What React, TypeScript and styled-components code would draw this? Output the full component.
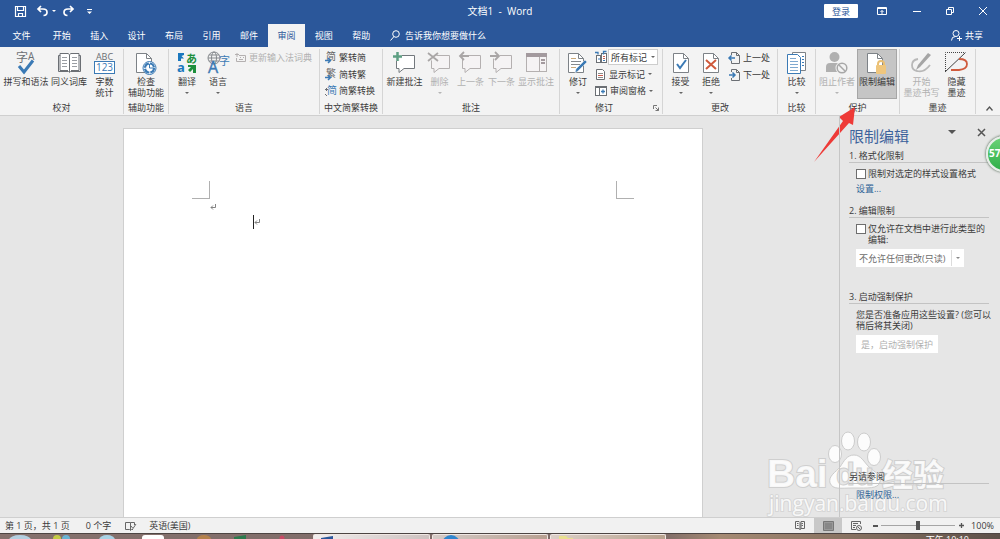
import React, { ReactNode } from "react";
import styled, { createGlobalStyle, css } from "styled-components";

const GlobalStyle = createGlobalStyle`
  * { box-sizing: border-box; }
  html, body { margin: 0; padding: 0; }
  body, button, input, select {
    font-family: "Open Sans", "Noto Sans CJK SC", sans-serif;
    font-size: 9px;
    line-height: 11px;
    color: #3b3b3b;
  }
  button {
    margin: 0; padding: 0; border: 0; background: none;
    white-space: nowrap; display: flex; align-items: center; justify-content: center;
  }
  svg { display: block; flex: none; overflow: visible; }
`;

const BLUE = "#2b579a";
const INK = "#6b6f74";
const ACCENT = "#3b7ab5";
const OFF = "#b4b0b0";

/* ---------- shell ---------- */
const Shell = styled.div`
  position: relative;
  height: 100vh;
  display: flex;
  flex-direction: column;
  overflow: hidden;
  background: #e6e6e6;
`;
const TitleBar = styled.header`
  flex: none;
  height: 24px;
  padding-bottom: 2px;
  display: grid;
  grid-template-columns: 1fr auto 1fr;
  align-items: center;
  background: ${BLUE};
  color: #fff;
`;
const QuickAccess = styled.div`
  display: flex;
  align-items: center;
  padding-left: 15px;
`;
const QuickButton = styled.button<{ $gap?: number }>`
  margin-right: ${(p) => p.$gap ?? 0}px;
  height: 14px;
`;
const DocTitle = styled.div`
  font-size: 10px;
  line-height: 12px;
  white-space: pre;
`;
const WindowTools = styled.div`
  display: flex;
  align-items: center;
  justify-content: flex-end;
  padding-right: 12px;
`;
const SignIn = styled.button`
  width: 34px;
  height: 14px;
  background: #fff;
  color: ${BLUE};
  border-radius: 1px;
  margin-right: 18px;
`;
const WindowButton = styled.button<{ $gap?: number }>`
  width: 11px;
  height: 14px;
  margin-right: ${(p) => p.$gap ?? 0}px;
`;

const TabBar = styled.nav`
  flex: none;
  height: 23px;
  display: flex;
  align-items: stretch;
  background: ${BLUE};
`;
const Tabs = styled.div`
  display: grid;
  grid-template-columns: 43px repeat(9, 1fr);
  width: 380px;
`;
const Tab = styled.button<{ $active?: boolean }>`
  color: ${(p) => (p.$active ? BLUE : "#fff")};
  background: ${(p) => (p.$active ? "#f3f3f3" : "transparent")};
`;
const TellMe = styled.button`
  color: #fff;
  gap: 5px;
  margin-left: 10px;
`;
const Share = styled.button`
  color: #fff;
  gap: 3px;
  margin-left: auto;
  margin-right: 17px;
`;

/* ---------- ribbon ---------- */
const Ribbon = styled.section`
  flex: none;
  display: flex;
  padding: 2px 0 1px;
  background: #f3f3f3;
  border-bottom: 1px solid #cfcfcf;
`;
const Group = styled.div<{ $w: number }>`
  width: ${(p) => p.$w}px;
  flex: none;
  display: flex;
  flex-direction: column;
  gap: 3px;
  border-right: 1px solid #d5d5d5;
`;
const GroupBody = styled.div<{ $pad: number }>`
  height: 50px;
  display: flex;
  padding-left: ${(p) => p.$pad}px;
`;
const GroupLabel = styled.div`
  display: flex;
  justify-content: center;
  line-height: 12px;
  white-space: nowrap;
`;
const Launcher = styled.button`
  width: 9px;
  height: 12px;
  margin-left: auto;
`;
const ReviseLabel = styled(GroupLabel)`
  padding: 0 2px 0 35px;
  justify-content: flex-start;
`;
const Big = styled.button<{ $w: number; $pressed?: boolean }>`
  width: ${(p) => p.$w}px;
  height: 50px;
  flex-direction: column;
  justify-content: flex-start;
  &:disabled { color: #b1b1b1; }
  ${(p) => p.$pressed && css`
    background: #c5c5c5;
    outline: 1px solid #a6a6a6;
    outline-offset: -1px;
  `}
`;
const BigIcon = styled.span`
  height: 27px;
  display: flex;
  align-items: center;
`;
const CaretRow = styled.span`
  height: 11px;
  display: flex;
  align-items: center;
`;
const Stack = styled.div<{ $ml?: number }>`
  display: flex;
  flex-direction: column;
  align-items: flex-start;
  margin-left: ${(p) => p.$ml ?? 0}px;
`;
const Small = styled.button`
  height: 17px;
  gap: 3px;
  &:disabled { color: #b1b1b1; }
`;
const MarkupRow = styled.div`
  height: 17px;
  display: flex;
  align-items: center;
  gap: 1px;
`;
const SelectBox = styled.div<{ $w: number; $h: number; $line?: boolean }>`
  position: relative;
  width: ${(p) => p.$w}px;
  height: ${(p) => p.$h}px;
  background: #fff;
  border: 1px solid ${(p) => (p.$line ? "#fff" : "#cdcdcd")};
  select {
    appearance: none;
    width: 100%;
    height: 100%;
    display: block;
    margin: 0;
    padding: 0 0 0 2px;
    border: 0;
    background: transparent;
    opacity: 1;
    color: ${(p) => (p.$line ? "#6d6d6d" : "#3b3b3b")};
  }
`;
const SelectArrow = styled.span<{ $line?: boolean }>`
  position: absolute;
  right: 0;
  top: 0;
  bottom: 0;
  width: ${(p) => (p.$line ? 12 : 8)}px;
  display: flex;
  align-items: center;
  justify-content: center;
  pointer-events: none;
  border-left: ${(p) => (p.$line ? "1px solid #dcdcdc" : "0")};
`;
const RibbonEnd = styled.div`
  flex: 1;
  display: flex;
  align-items: flex-end;
  justify-content: flex-end;
  padding: 0 7px 3px 0;
`;

/* ---------- workspace ---------- */
const Workspace = styled.main`
  flex: 1;
  min-height: 0;
  display: flex;
`;
const Canvas = styled.div`
  flex: 1;
  display: flex;
  justify-content: center;
  padding: 12px 13px 0 0;
`;
const Page = styled.article`
  width: 580px;
  background: #fff;
  border: 1px solid #cfcfcf;
  border-bottom: 0;
  padding: 52px 68px 0;
`;
const Margins = styled.div`
  display: flex;
  justify-content: space-between;
`;
const Corner = styled.span<{ $side: "left" | "right" }>`
  width: 18px;
  height: 18px;
  border-bottom: 1px solid #b0b0b0;
  border-${(p) => (p.$side === "left" ? "right" : "left")}: 1px solid #b0b0b0;
`;
const Line = styled.div<{ $indent: number }>`
  height: 15px;
  display: flex;
  align-items: center;
  padding-left: ${(p) => p.$indent}px;
`;
const Cursor = styled.span`
  width: 1px;
  height: 14px;
  background: #222;
`;

const Pane = styled.aside`
  position: relative;
  z-index: 1;
  width: 161px;
  flex: none;
  display: flex;
  flex-direction: column;
  border-left: 1px solid #c6c6c6;
  padding: 8px 11px 16px 9px;
`;
const PaneHead = styled.div`
  display: flex;
  align-items: flex-start;
  height: 26px;
  h2 {
    margin: 0;
    flex: 1;
    font-size: 15px;
    line-height: 24px;
    font-weight: 400;
    color: #3d639c;
  }
`;
const PaneButton = styled.button<{ $gap?: number }>`
  width: 9px;
  height: 16px;
  margin-right: ${(p) => p.$gap ?? 3}px;
`;
const Section = styled.section<{ $top?: number | "auto" }>`
  margin-top: ${(p) => (p.$top === "auto" ? "auto" : `${p.$top ?? 0}px`)};
  h3 {
    margin: 0;
    font-size: 9px;
    line-height: 12px;
    font-weight: 400;
    border-bottom: 1px solid #c3c3c3;
  }
`;
const SectionBody = styled.div`
  display: flex;
  flex-direction: column;
  align-items: flex-start;
  gap: 4px;
  padding: 5px 0 0 7px;
  p { margin: 0; white-space: nowrap; }
`;
const Check = styled.label`
  display: flex;
  align-items: flex-start;
  gap: 2px;
  white-space: nowrap;
  line-height: 11px;
  input {
    appearance: none;
    flex: none;
    width: 10px;
    height: 10px;
    margin: 1px 0 0;
    background: #fff;
    border: 1px solid #6e6e6e;
  }
`;
const PaneLink = styled.a`
  color: #2f6496;
  text-decoration: none;
  line-height: 12px;
`;
const StartButton = styled.button`
  width: 82px;
  height: 18px;
  background: #fff;
  &:disabled { color: #b0b0b0; }
`;

/* ---------- status bar and taskbar ---------- */
const StatusBar = styled.footer`
  flex: none;
  height: 16px;
  display: flex;
  align-items: center;
  padding: 0 6px 0 5px;
  background: #f1f1f1;
  border-top: 1px solid #cfcfcf;
  white-space: nowrap;
`;
const StatusText = styled.span<{ $gap: number }>`
  margin-right: ${(p) => p.$gap}px;
`;
const ViewButtons = styled.div`
  display: flex;
  margin-left: auto;
  align-self: stretch;
`;
const ViewButton = styled.button<{ $active?: boolean }>`
  width: 28px;
  background: ${(p) => (p.$active ? "#c8c8c8" : "transparent")};
`;
const Zoom = styled.div`
  display: flex;
  align-items: center;
  gap: 3px;
  margin: 0 7px 0 2px;
  input {
    appearance: none;
    width: 74px;
    height: 10px;
    margin: 0;
    background: linear-gradient(#a5a5a5, #a5a5a5) center / 100% 1px no-repeat;
  }
  input::-webkit-slider-thumb {
    appearance: none;
    width: 4px;
    height: 9px;
    background: #555;
  }
`;
const ZoomButton = styled.button`
  width: 6px;
  height: 10px;
`;
const Taskbar = styled.div`
  flex: none;
  height: 6px;
  display: flex;
  border-top: 1px solid #4d4543;
  background: linear-gradient(90deg, #85716d 0%, #7d6a67 66%, #a58a73 72%, #8a7463 84%, #5d5049 100%);
  overflow: hidden;
`;
const TaskIcons = styled.div`
  flex: none;
  width: 313px;
`;
const TaskWindow = styled.div<{ $w: number; $bg: string }>`
  width: ${(p) => p.$w}px;
  flex: none;
  margin-right: 2px;
  border: 1px solid #efe7e3;
  border-bottom: 0;
  border-radius: 2px 2px 0 0;
  background: ${(p) => p.$bg};
`;
const Clock = styled.div`
  margin-left: auto;
  margin-right: 31px;
  line-height: 12px;
  color: #fff;
  white-space: nowrap;
`;

/* ---------- overlays ---------- */
const Watermark = styled.svg`
  position: absolute;
  right: 50px;
  bottom: 18px;
  pointer-events: none;
`;
const Pointer = styled.svg`
  position: absolute;
  right: 142px;
  top: 107px;
  pointer-events: none;
`;
const Badge = styled.div`
  position: absolute;
  z-index: 2;
  right: -22px;
  top: 136px;
  width: 36px;
  height: 36px;
  border-radius: 50%;
  border: 2px solid #e8efe9;
  background: linear-gradient(#6ad277, #2fae48);
  box-shadow: 0 0 2px 1px #8d9a8f;
  color: #fff;
  font-size: 10px;
  font-weight: 700;
  line-height: 31px;
  padding-left: 1px;
`;

/* ---------- icons ---------- */
const Caret = ({ color = "#666", s = 4 }: { color?: string; s?: number }) => (
  <svg width={s} height={s / 2} viewBox="0 0 4 2"><path d="M0 0h4L2 2z" fill={color} /></svg>
);
const SpellIcon = () => (
  <svg width="20" height="24" viewBox="0 0 20 24">
    <text x="0" y="11" fontSize="12" fill={INK}>字</text>
    <text x="12" y="9" fontSize="10" fill={INK}>A</text>
    <path d="M3 15l5 6L17 9.5" stroke={ACCENT} strokeWidth="3" fill="none" />
  </svg>
);
const BookIcon = () => (
  <svg width="23" height="22" viewBox="0 0 23 22" fill="none">
    <path d="M.5 3.5H2V1.500h8l1.500 1 1.500-1h8v2h1.500v16h-10l-1 1-1-1H.5z" fill="#fff" stroke={INK} />
    <path d="M11.500 3v17M2 3v15.500h8M21 3v15.500h-8" stroke={INK} />
    <path d="M4 5.500h5M4 8.500h5M4 11.500h5M4 14.500h5M14 5.500h5M14 8.500h5M14 11.500h5M14 14.500h5" stroke="#9a9ea3" />
  </svg>
);
const CountIcon = () => (
  <svg width="21" height="22" viewBox="0 0 21 22">
    <text x="10.5" y="8" fontSize="9" textAnchor="middle" fill={INK}>ABC</text>
    <rect x=".5" y="9.5" width="20" height="12" fill="#fff" stroke={ACCENT} />
    <text x="10.5" y="19" fontSize="10" textAnchor="middle" fill={ACCENT}>123</text>
  </svg>
);
const Sheet = ({ children, w = 20 }: { children?: ReactNode; w?: number }) => (
  <svg width={w} height="22" viewBox={`0 0 ${w} 22`} fill="none">
    <path d="M.5 1.500h10l5 5v14H.5z" fill="#fff" stroke="#7d8287" />
    <path d="M10.500 1.500v5h5" stroke="#7d8287" />
    {children}
  </svg>
);
const AccessIcon = () => (
  <Sheet>
    <circle cx="13.5" cy="16" r="6.500" fill="#fff" stroke={ACCENT} />
    <circle cx="13.5" cy="16" r="4.500" stroke={ACCENT} strokeWidth="2.200" strokeDasharray="6 1" />
    <path d="M13.500 12v4h4" stroke={ACCENT} />
  </Sheet>
);
const TranslateIcon = () => (
  <svg width="20" height="22" viewBox="0 0 20 22">
    <path d="M1 1v8h3V6.500h3L4.500 4 7 3V1z" fill="#1b78be" />
    <text x="9" y="11" fontSize="11" fontWeight="700" fill="#1d8f3c">あ</text>
    <text x="0" y="20" fontSize="13" fontWeight="700" fill="#1b78be">a</text>
    <path d="M19 21v-8h-8v2h3l-3 3 2 2 3-3v4z" fill="#1d8f3c" />
  </svg>
);
const LanguageIcon = () => (
  <svg width="23" height="23" viewBox="0 0 23 23" fill="none">
    <circle cx="7" cy="7" r="6" stroke="#85898d" />
    <ellipse cx="7" cy="7" rx="2.5" ry="6" stroke="#85898d" />
    <path d="M1 7h12M2 4h10M2 10h10" stroke="#85898d" />
    <text x="1" y="22" fontSize="16" fill={ACCENT} stroke={ACCENT} strokeWidth=".4">A</text>
    <text x="12" y="14" fontSize="11" fill={ACCENT}>字</text>
  </svg>
);
const ImeIcon = () => (
  <svg width="11" height="10" viewBox="0 0 11 10" fill="none" stroke={OFF}>
    <path d="M4 2.500h6.500v6h-9V5" /><path d="M0 1.500h4M2 0v4M4 6.500h4M5 4.500h1M8 4.500h1" />
  </svg>
);
const ConvertIcon = ({ ch, both }: { ch: string; both?: boolean }) => (
  <svg width="11" height="12" viewBox="0 0 11 12" fill="none">
    <text x={both ? 2 : 1} y="9" fontSize="10" fill={both ? ACCENT : "#666"}>{ch}</text>
    {both ? <path d="M0 4.500h3M1.500 3v3M0 9l2 2" stroke={INK} /> : <path d="M0 9.500h5M3 7l2.500 2.500L3 12" stroke={ACCENT} strokeWidth="1.500" />}
  </svg>
);
const Comment = ({ children, color = OFF }: { children?: ReactNode; color?: string }) => (
  <svg width="23" height="22" viewBox="0 0 23 22" fill="none">
    <path d="M3.500 3.500h18v13H11l-5 4v-4H3.500z" fill={color === OFF ? "#f5f3f4" : "#fff"} stroke={color} />
    {children}
  </svg>
);
const NewCommentIcon = () => (
  <Comment color="#73787d"><path d="M0 4h9M4.500 0v9" stroke="#f3f3f3" strokeWidth="5" /><path d="M0 4.500h9M4.500 0v9" stroke="#5d9f82" strokeWidth="2.500" /></Comment>
);
const DeleteCommentIcon = () => (
  <Comment><path d="M0 0l9 9M9 0L0 9" stroke="#f3f3f3" strokeWidth="4" /><path d="M0 1l10 8M10 1L0 9" stroke="#a9a6a6" strokeWidth="1.800" /></Comment>
);
const StepCommentIcon = ({ next }: { next?: boolean }) => (
  <Comment>
    <g transform={next ? "translate(10 0) scale(-1 1)" : undefined}>
      <path d="M0 4h10" stroke="#f3f3f3" strokeWidth="5" />
      <path d="M1 4h9M5 0L1 4l4 4" stroke="#a9a6a6" strokeWidth="1.800" />
    </g>
  </Comment>
);
const ShowCommentsIcon = () => (
  <svg width="21" height="20" viewBox="0 0 21 20" fill="none">
    <rect x=".5" y=".5" width="20" height="18" fill="#f5f3f4" stroke={OFF} />
    <path d="M0 2h21" stroke="#a39a9e" strokeWidth="4" />
    <path d="M13.500 4v15" stroke={OFF} /><path d="M15 7h4M15 10h4" stroke="#a39a9e" strokeWidth="2" />
  </svg>
);
const TrackIcon = () => (
  <Sheet>
    <path d="M3 9.500h10M3 12.500h9" stroke="#85898d" />
    <path d="M3 6.500h5M3 15.500h5" stroke="#c9a879" />
    <path d="M19 10L10 19l-3 2 1-4 9-9z" fill={ACCENT} stroke="#f3f3f3" strokeWidth=".5" />
  </Sheet>
);
const MarkupIcon = () => (
  <svg width="12" height="12" viewBox="0 0 12 12" fill="none">
    <rect x="1.5" y="4.5" width="4" height="7" fill="#fff" stroke={INK} /><rect x="6.5" y="2.5" width="5" height="9" fill="#fff" stroke={INK} />
    <path d="M0 1.500h3v2M11.500.500h-3v3" stroke={ACCENT} strokeWidth="1.300" /><path d="M8 5.500h2M8 7.500h2" stroke="#c75c4c" /><path d="M8 9.500h2M3 8h2" stroke={ACCENT} />
  </svg>
);
const ShowMarkupIcon = () => (
  <svg width="11" height="12" viewBox="0 0 11 12" fill="none">
    <path d="M1.500 1.500h6l2 2v8h-8z" fill="#fff" stroke={INK} /><path d="M3 5.500h5M3 9.500h5" stroke="#8b8b8b" /><path d="M3 7.500h5" stroke="#c75c4c" />
  </svg>
);
const ReviewPaneIcon = () => (
  <svg width="12" height="10" viewBox="0 0 12 10" fill="none">
    <rect x=".5" y=".5" width="11" height="9" fill="#fff" stroke={INK} /><path d="M0 1h12" stroke={INK} strokeWidth="2" />
    <path d="M4.500 2v8" stroke={INK} /><path d="M6 5.500h4M8 3.500v4" stroke={ACCENT} strokeWidth="1.300" />
  </svg>
);
const AcceptIcon = () => <Sheet w={16}><path d="M4 12l3 4 6-8" stroke={ACCENT} strokeWidth="2" /></Sheet>;
const RejectIcon = () => <Sheet w={16}><path d="M3 8l10 9M13 8L3 17" stroke="#d05a3c" strokeWidth="2" /></Sheet>;
const ChangeIcon = ({ next }: { next?: boolean }) => (
  <svg width="11" height="12" viewBox="0 0 11 12" fill="none">
    <path d="M2.500 3V.500h5l3 3v8h-8V9M7.500.500v3h3" stroke={INK} />
    {next ? <path d="M0 6h6M3.500 3.500L6 6 3.500 8.500" stroke={ACCENT} strokeWidth="1.500" /> : <path d="M6 6H0M2.500 3.500L0 6l2.500 2.500" stroke={ACCENT} strokeWidth="1.500" />}
  </svg>
);
const CompareIcon = () => (
  <svg width="19" height="22" viewBox="0 0 19 22" fill="none">
    <path d="M5.500.500h13v18h-13z" fill="#fff" stroke="#7d8287" />
    <path d="M.5 2.500h10l3 3v16H.5z" fill="#fff" stroke={ACCENT} />
    <path d="M3 6.500h6M3 9.500h8M3 12.500h8M3 15.500h8M3 18.500h8" stroke="#7fa9d0" /><path d="M15 4.500h2M15 7.500h2M15 10.500h2M15 13.500h2" stroke={ACCENT} />
  </svg>
);
const BlockIcon = () => (
  <svg width="22" height="22" viewBox="0 0 22 22" fill="none">
    <circle cx="8.5" cy="5" r="5" fill="#b0b0b0" /><path d="M0 20v-5q0-4 4-4h9q3 0 3 4v5z" fill="#b0b0b0" />
    <circle cx="16" cy="16" r="6.5" fill="#f3f3f3" /><circle cx="16" cy="16" r="4.800" stroke="#a8a8a8" strokeWidth="1.500" /><path d="M12.500 12.500l7 7" stroke="#a8a8a8" strokeWidth="1.500" />
  </svg>
);
const RestrictIcon = () => (
  <Sheet>
    <path d="M11 14v-2a3 3 0 0 1 6 0v2" stroke="#e9bf73" strokeWidth="2" /><rect x="9" y="13" width="10" height="9" rx="1" fill="#efc67d" />
  </Sheet>
);
const InkIcon = () => (
  <svg width="21" height="22" viewBox="0 0 21 22" fill="none">
    <path d="M20 3L9 15l-4 3 2-5L17 1z" fill="#a5a5a5" />
    <path d="M7 7q-6 1-6 6t5 6q7 2 13-6" stroke="#b8b8b8" strokeWidth="1.800" />
  </svg>
);
const HideInkIcon = () => (
  <svg width="23" height="21" viewBox="0 0 23 21" fill="none">
    <path d="M.5 19V.500h20" stroke="#444" strokeDasharray="1 1" /><path d="M0 20L20 1" stroke="#444" />
    <path d="M14 7q8 0 8 5t-8 6H6" stroke="#d05a3c" strokeWidth="1.800" />
  </svg>
);
const ReturnMark = () => (
  <svg width="6" height="6" viewBox="0 0 6 6" fill="none" stroke="#777"><path d="M5.500 0v3.500H1M3 1.500l-2 2 2 2" strokeWidth=".9" /></svg>
);

/* ---------- composed parts ---------- */
type BigProps = { w: number; icon: ReactNode; label: string; label2?: string; caret?: boolean; disabled?: boolean; pressed?: boolean };
const BigButton = ({ w, icon, label, label2, caret, disabled, pressed }: BigProps) => (
  <Big type="button" $w={w} $pressed={pressed} disabled={disabled} aria-pressed={pressed}>
    <BigIcon>{icon}</BigIcon>
    <span>{label}</span>
    {label2 && <span>{label2}</span>}
    {caret && <CaretRow><Caret color={disabled ? "#b5b5b5" : "#666"} /></CaretRow>}
  </Big>
);
const RibbonGroup = ({ w, pad, label, children }: { w: number; pad: number; label: string; children: ReactNode }) => (
  <Group $w={w}>
    <GroupBody $pad={pad}>{children}</GroupBody>
    <GroupLabel>{label}</GroupLabel>
  </Group>
);

const tabs = ["文件", "开始", "插入", "设计", "布局", "引用", "邮件", "审阅", "视图", "帮助"];

export default function App() {
  return (
    <Shell>
      <GlobalStyle />
      <TitleBar>
        <QuickAccess>
          <QuickButton type="button" aria-label="保存" $gap={11}>
            <svg width="11" height="11" viewBox="0 0 11 11" fill="none" stroke="#fff"><path d="M.5.500h10v10H.5zM2.500.500v4h6v-4M3.500 10V7.500h4V10" strokeWidth="1.200" /></svg>
          </QuickButton>
          <QuickButton type="button" aria-label="撤消" $gap={4}>
            <svg width="11" height="10" viewBox="0 0 11 10" fill="none" stroke="#fff"><path d="M4 0L1 3l3 3M1 3h5q4 0 4 3.200T6.500 9.500" strokeWidth="1.700" /></svg>
          </QuickButton>
          <QuickButton type="button" aria-label="撤消选项" $gap={7}><Caret color="#fff" /></QuickButton>
          <QuickButton type="button" aria-label="重复" $gap={13}>
            <svg width="11" height="10" viewBox="0 0 11 10" fill="none" stroke="#fff"><path d="M7 0l3 3-3 3M10 3H5Q1 3 1 6.200T4.500 9.500" strokeWidth="1.700" /></svg>
          </QuickButton>
          <QuickButton type="button" aria-label="自定义">
            <svg width="5" height="5" viewBox="0 0 5 5" fill="#fff"><path d="M0 0h5v1H0zM0 2.500h5L2.500 5z" /></svg>
          </QuickButton>
        </QuickAccess>
        <DocTitle>文档1  -  Word</DocTitle>
        <WindowTools>
          <SignIn type="button">登录</SignIn>
          <WindowButton type="button" aria-label="功能区显示选项" $gap={24}>
            <svg width="10" height="8" viewBox="0 0 10 8" fill="none" stroke="#fff"><path d="M.5.500h9v7h-9zM0 1.500h10M5 3.500V7M3.500 5L5 3.500 6.500 5" /></svg>
          </WindowButton>
          <WindowButton type="button" aria-label="最小化" $gap={22}>
            <svg width="8" height="1" viewBox="0 0 8 1"><path d="M0 0h8v1H0z" fill="#fff" /></svg>
          </WindowButton>
          <WindowButton type="button" aria-label="还原" $gap={22}>
            <svg width="8" height="8" viewBox="0 0 8 8" fill="none" stroke="#fff"><path d="M.5 2.500h5v5h-5zM2.500 2.500v-2h5v5h-2" /></svg>
          </WindowButton>
          <WindowButton type="button" aria-label="关闭">
            <svg width="8" height="8" viewBox="0 0 8 8" stroke="#fff"><path d="M0 0l8 8M8 0L0 8" /></svg>
          </WindowButton>
        </WindowTools>
      </TitleBar>

      <TabBar>
        <Tabs>{tabs.map((t) => <Tab key={t} type="button" $active={t === "审阅"}>{t}</Tab>)}</Tabs>
        <TellMe type="button">
          <svg width="10" height="11" viewBox="0 0 10 11" fill="none" stroke="#fff"><circle cx="6" cy="4" r="3.300" /><path d="M4 6.500L.5 10.500" /></svg>
          告诉我你想要做什么
        </TellMe>
        <Share type="button">
          <svg width="11" height="11" viewBox="0 0 11 11" fill="none" stroke="#fff"><circle cx="5" cy="3.500" r="3" /><path d="M.5 10.500q0-4 4-4M6 8.500h5M8.500 6v5" /></svg>
          共享
        </Share>
      </TabBar>

      <Ribbon>
        <RibbonGroup w={124} pad={3} label="校对">
          <BigButton w={46} icon={<SpellIcon />} label="拼写和语法" />
          <BigButton w={40} icon={<BookIcon />} label="同义词库" />
          <BigButton w={31} icon={<CountIcon />} label="字数" label2="统计" />
        </RibbonGroup>
        <RibbonGroup w={45} pad={2} label="辅助功能">
          <BigButton w={40} icon={<AccessIcon />} label="检查" label2="辅助功能" />
        </RibbonGroup>
        <RibbonGroup w={151} pad={2} label="语言">
          <BigButton w={32} icon={<TranslateIcon />} label="翻译" caret />
          <BigButton w={30} icon={<LanguageIcon />} label="语言" caret />
          <Stack $ml={2}>
            <Small type="button" disabled><ImeIcon />更新输入法词典</Small>
          </Stack>
        </RibbonGroup>
        <RibbonGroup w={63} pad={5} label="中文简繁转换">
          <Stack>
            <Small type="button"><ConvertIcon ch="简" />繁转简</Small>
            <Small type="button"><ConvertIcon ch="繁" />简转繁</Small>
            <Small type="button"><ConvertIcon ch="简" both />简繁转换</Small>
          </Stack>
        </RibbonGroup>
        <RibbonGroup w={177} pad={2} label="批注">
          <BigButton w={39} icon={<NewCommentIcon />} label="新建批注" />
          <BigButton w={31} icon={<DeleteCommentIcon />} label="删除" caret disabled />
          <BigButton w={31} icon={<StepCommentIcon />} label="上一条" disabled />
          <BigButton w={31} icon={<StepCommentIcon next />} label="下一条" disabled />
          <BigButton w={38} icon={<ShowCommentsIcon />} label="显示批注" disabled />
        </RibbonGroup>
        <Group $w={103}>
          <GroupBody $pad={4}>
            <BigButton w={28} icon={<TrackIcon />} label="修订" caret />
            <Stack $ml={3}>
              <MarkupRow>
                <MarkupIcon />
                <SelectBox $w={50} $h={16}>
                  <select aria-label="显示以供审阅"><option>所有标记</option></select>
                  <SelectArrow><Caret /></SelectArrow>
                </SelectBox>
              </MarkupRow>
              <Small type="button"><ShowMarkupIcon />显示标记<Caret /></Small>
              <Small type="button"><ReviewPaneIcon />审阅窗格<Caret /></Small>
            </Stack>
          </GroupBody>
          <ReviseLabel>
            修订
            <Launcher type="button" aria-label="修订选项">
              <svg width="6" height="6" viewBox="0 0 6 6" fill="none" stroke="#777"><path d="M.5 4V.500H4M2.500 2.500l3 3M5.500 2.500v3h-3" /></svg>
            </Launcher>
          </ReviseLabel>
        </Group>
        <RibbonGroup w={115} pad={2} label="更改">
          <BigButton w={31} icon={<AcceptIcon />} label="接受" caret />
          <BigButton w={30} icon={<RejectIcon />} label="拒绝" caret />
          <Stack $ml={3}>
            <Small type="button"><ChangeIcon />上一处</Small>
            <Small type="button"><ChangeIcon next />下一处</Small>
          </Stack>
        </RibbonGroup>
        <RibbonGroup w={38} pad={3} label="比较">
          <BigButton w={31} icon={<CompareIcon />} label="比较" caret />
        </RibbonGroup>
        <RibbonGroup w={84} pad={1} label="保护">
          <BigButton w={40} icon={<BlockIcon />} label="阻止作者" caret disabled />
          <BigButton w={40} icon={<RestrictIcon />} label="限制编辑" pressed />
        </RibbonGroup>
        <RibbonGroup w={76} pad={2} label="墨迹">
          <BigButton w={39} icon={<InkIcon />} label="开始" label2="墨迹书写" disabled />
          <BigButton w={31} icon={<HideInkIcon />} label="隐藏" label2="墨迹" />
        </RibbonGroup>
        <RibbonEnd>
          <button type="button" aria-label="折叠功能区">
            <svg width="7" height="5" viewBox="0 0 7 5" fill="none" stroke="#555"><path d="M.5 4.500l3-3.500 3 3.500" strokeWidth="1.300" /></svg>
          </button>
        </RibbonEnd>
      </Ribbon>

      <Workspace>
        <Canvas>
          <Page>
            <Margins><Corner $side="left" /><Corner $side="right" /></Margins>
            <Line $indent={18}><ReturnMark /></Line>
            <Line $indent={61}><Cursor /><ReturnMark /></Line>
          </Page>
        </Canvas>
        <Pane>
          <PaneHead>
            <h2>限制编辑</h2>
            <PaneButton type="button" aria-label="窗格选项" $gap={21}><Caret s={8} color="#555" /></PaneButton>
            <PaneButton type="button" aria-label="关闭窗格">
              <svg width="7" height="7" viewBox="0 0 7 7" stroke="#555" strokeWidth="1.500"><path d="M0 0l7 7M7 0L0 7" /></svg>
            </PaneButton>
          </PaneHead>
          <Section>
            <h3>1. 格式化限制</h3>
            <SectionBody>
              <Check><input type="checkbox" /><span>限制对选定的样式设置格式</span></Check>
              <PaneLink href="#settings">设置...</PaneLink>
            </SectionBody>
          </Section>
          <Section $top={10}>
            <h3>2. 编辑限制</h3>
            <SectionBody>
              <Check><input type="checkbox" /><span>仅允许在文档中进行此类型的<br />编辑:</span></Check>
              <SelectBox $w={108} $h={18} $line>
                <select aria-label="编辑限制类型" disabled><option>不允许任何更改(只读)</option></select>
                <SelectArrow $line><Caret color="#888" /></SelectArrow>
              </SelectBox>
            </SectionBody>
          </Section>
          <Section $top={24}>
            <h3>3. 启动强制保护</h3>
            <SectionBody>
              <p>您是否准备应用这些设置? (您可以<br />稍后将其关闭)</p>
              <StartButton type="button" disabled>是，启动强制保护</StartButton>
            </SectionBody>
          </Section>
          <Section $top="auto">
            <h3>另请参阅</h3>
            <SectionBody><PaneLink href="#permissions">限制权限...</PaneLink></SectionBody>
          </Section>
        </Pane>
      </Workspace>

      <StatusBar>
        <StatusText $gap={16}>第 1 页，共 1 页</StatusText>
        <StatusText $gap={14}>0 个字</StatusText>
        <StatusText $gap={13}>
          <svg width="11" height="10" viewBox="0 0 11 10" fill="none" stroke="#666"><path d="M5.500 9V1.500H.5v7h4l1 1 1-1H8M5.500 1.500h4V4M6 5l2 2.500L11 3" /></svg>
        </StatusText>
        <StatusText $gap={0}>英语(美国)</StatusText>
        <ViewButtons>
          <ViewButton type="button" aria-label="阅读视图">
            <svg width="10" height="9" viewBox="0 0 10 9" fill="none" stroke="#666"><path d="M5 8.500V1.500L4 .500H.5v7H4zl1-1V1.500L6 .500h3.500v7H6zM2 2.500h1.500M2 4.500h1.500M6.500 2.500H8M6.500 4.500H8" /></svg>
          </ViewButton>
          <ViewButton type="button" aria-label="页面视图" $active>
            <svg width="11" height="10" viewBox="0 0 11 10" fill="#999" stroke="#777"><path d="M.5.500h10v9H.5zM2 3h7M2 5h7M2 7h7" /></svg>
          </ViewButton>
          <ViewButton type="button" aria-label="Web 版式视图">
            <svg width="11" height="10" viewBox="0 0 11 10" fill="none" stroke="#666"><path d="M5 8.500H.5v-8h9V3M2 2.500h5M2 4.500h3M2 6.500h2" /><circle cx="8" cy="7" r="2.5" fill="#f1f1f1" /><path d="M6.500 5.500l3 3" /></svg>
          </ViewButton>
        </ViewButtons>
        <Zoom>
          <ZoomButton type="button" aria-label="缩小"><svg width="5" height="2" viewBox="0 0 5 2"><path d="M0 0h5v2H0z" fill="#555" /></svg></ZoomButton>
          <input type="range" aria-label="缩放" min="0" max="200" defaultValue="100" />
          <ZoomButton type="button" aria-label="放大"><svg width="5" height="5" viewBox="0 0 5 5"><path d="M0 2.500h5M2.500 0v5" stroke="#555" strokeWidth="1.300" /></svg></ZoomButton>
        </Zoom>
        <span>100%</span>
      </StatusBar>
      <Taskbar>
        <TaskIcons>
          <svg width="313" height="6" viewBox="0 0 313 6">
            <ellipse cx="20" cy="6" rx="11" ry="5" fill="#b4cfe0" />
            <circle cx="57" cy="5" r="4" fill="#c5cc45" /><circle cx="66" cy="5" r="4" fill="#6ab4d4" />
            <ellipse cx="107" cy="6" rx="8" ry="5" fill="#a9d3e6" />
            <rect x="142" y="1" width="22" height="8" rx="3" fill="#fff" />
            <ellipse cx="204" cy="5" rx="7" ry="4" fill="#b5824d" />
            <path d="M234 3l12-2v5h-12z" fill="#2c7a4d" /><circle cx="282" cy="4" r="2.5" fill="#c84a66" />
          </svg>
        </TaskIcons>
        <TaskWindow $w={117} $bg="linear-gradient(90deg, #f2eeee, #cdc1bf)">
          <svg width="20" height="5" viewBox="0 0 20 5"><path d="M7 3l12-2v4H7z" fill="#2b579a" /></svg>
        </TaskWindow>
        <TaskWindow $w={116} $bg="linear-gradient(90deg, #d5cbc7, #b8a091)">
          <svg width="30" height="5" viewBox="0 0 30 5"><circle cx="18" cy="9" r="9" fill="#2f86cf" /></svg>
        </TaskWindow>
        <TaskWindow $w={116} $bg="linear-gradient(90deg, #dccfc8, #b9a38f)">
          <svg width="24" height="5" viewBox="0 0 24 5"><path d="M8 1h7l2 2h5v3H8z" fill="#e9e08f" /></svg>
        </TaskWindow>
        <Clock>下午 10:10</Clock>
      </Taskbar>

      <Watermark width="182" height="90" viewBox="0 0 182 90" fill="#fff" fillOpacity=".85" stroke="#cccccc" strokeWidth="1">
        <text x="-1" y="56" fontFamily="Liberation Sans" fontWeight="700" fontSize="39" stroke="#cfcfcf" strokeWidth="2" paintOrder="stroke">Bai</text>
        <ellipse cx="67" cy="23" rx="6.5" ry="8.5" />
        <ellipse cx="80" cy="10" rx="6.5" ry="9" />
        <ellipse cx="96" cy="11" rx="6.5" ry="9" />
        <ellipse cx="106" cy="26" rx="6.5" ry="8.5" />
        <path d="M86 24c7 0 10 7 15 12 6 5 13 9 11 15-2 7-12 6-26 6s-21 2-24-5c-2-7 6-11 10-16 4-6 7-12 14-12z" />
        <text x="68" y="54" fontFamily="Liberation Sans" fontWeight="700" fontSize="31" fill="#e4e4e4" stroke="#d0d0d0">du</text>
        <text x="114" y="55" fontFamily="Noto Sans CJK SC" fontWeight="700" fontSize="31" stroke="#cfcfcf" strokeWidth="2" paintOrder="stroke">经验</text>
        <text x="1" y="80" fontFamily="Open Sans" fontSize="21" stroke="#d6d6d6" strokeWidth="2" paintOrder="stroke">jingyan.baidu.com</text>
      </Watermark>
      <Pointer width="44" height="56" viewBox="0 0 44 56">
        <path d="M0 55L29 14l-4-4L41 0l-2 18-4-2z" fill="#ee3a37" />
      </Pointer>
      <Badge>57</Badge>
    </Shell>
  );
}
